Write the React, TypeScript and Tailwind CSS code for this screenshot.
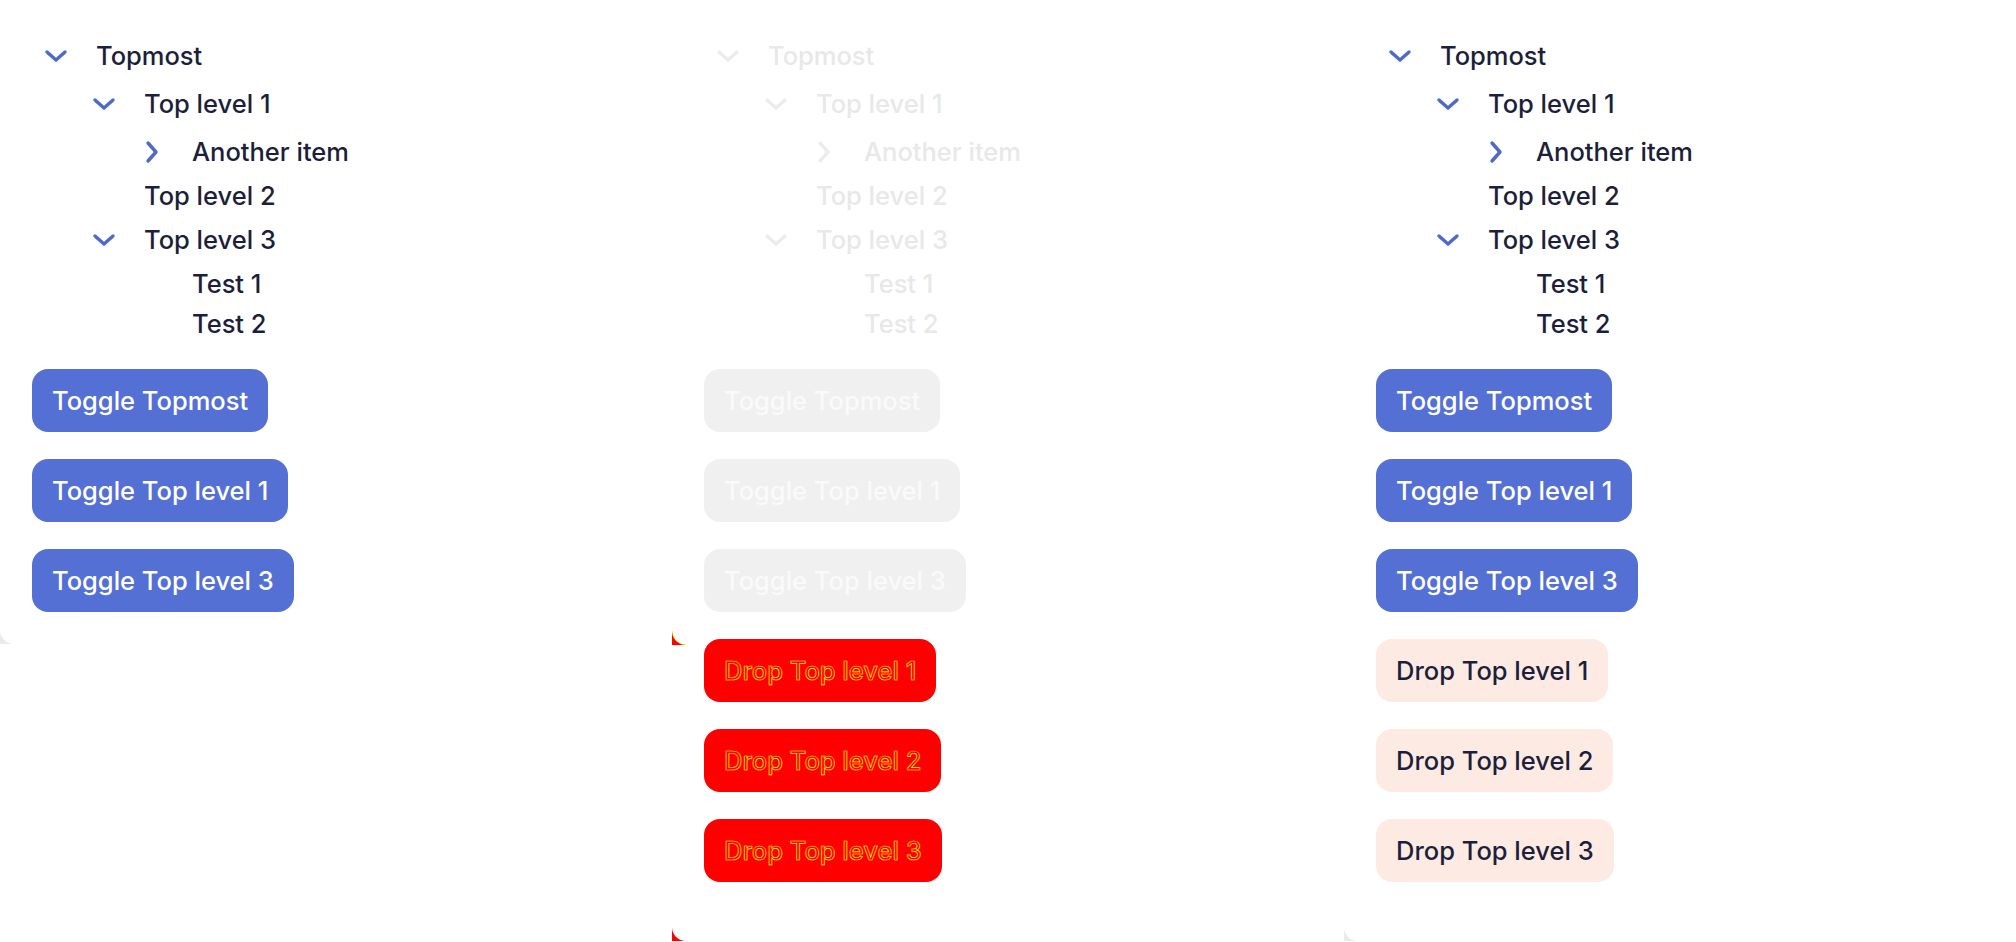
import { useState } from "react";

type TreeNode = {
  label: string;
  open?: boolean;
  children?: TreeNode[];
};

type Variant = "live" | "ghost";

const tree: TreeNode = {
  label: "Topmost",
  open: true,
  children: [
    {
      label: "Top level 1",
      open: true,
      children: [{ label: "Another item", open: false, children: [{ label: "Hidden" }] }],
    },
    { label: "Top level 2" },
    {
      label: "Top level 3",
      open: true,
      children: [{ label: "Test 1" }, { label: "Test 2" }],
    },
  ],
};

function Chevron({ open, ghost }: { open: boolean; ghost: boolean }) {
  return (
    <svg
      width="24"
      height="24"
      viewBox="0 0 24 24"
      fill="none"
      stroke={ghost ? "#ececec" : "#4f68c9"}
      strokeWidth="3.4"
      strokeLinecap="round"
      strokeLinejoin="round"
      className={open ? "" : "-rotate-90"}
    >
      <polyline points="3 8 12 16 21 8" />
    </svg>
  );
}

function TreeRow({ node, variant }: { node: TreeNode; variant: Variant }) {
  const ghost = variant === "ghost";
  const text = ghost ? "text-[#e8e8e8]" : "text-[#1c1f3b]";

  if (!node.children) {
    return <div className={`flex h-[40px] items-center pl-16 ${text}`}>{node.label}</div>;
  }

  return (
    <div>
      <div className={`flex h-[48px] items-center ${text}`}>
        <span className="flex h-12 w-12 items-center justify-center">
          <Chevron open={!!node.open} ghost={ghost} />
        </span>
        <span className="ml-4">{node.label}</span>
      </div>
      {node.open && (
        <div className="pl-12">
          {node.children.map((c) => (
            <TreeRow key={c.label} node={c} variant={variant} />
          ))}
        </div>
      )}
    </div>
  );
}

function Panel({ variant, drops }: { variant: Variant; drops: "none" | "red" | "soft" }) {
  const ghost = variant === "ghost";
  const [toggles] = useState(["Toggle Topmost", "Toggle Top level 1", "Toggle Top level 3"]);
  const dropLabels = ["Drop Top level 1", "Drop Top level 2", "Drop Top level 3"];

  // the outer fill only shows through the rounded bottom-left corner
  return (
    <div className={`relative w-[672px] shrink-0 ${ghost ? "bg-[#ff0000]" : "bg-[#ebebeb]"}`}>
      {ghost && (
        <div className="absolute left-0 top-[631px] h-[14px] w-[14px] bg-[radial-gradient(circle_at_100%_0,transparent_13.5px,#ffff00_13.5px,#ff0000_14.5px)]" />
      )}
      <div
        className={`rounded-bl-[14px] bg-white px-8 pt-8 ${
          drops === "none" ? "pb-8" : "pb-[59px]"
        }`}
      >
        <TreeRow node={tree} variant={variant} />

        <div className="mt-[25px] flex flex-col items-start gap-[27px]">
          {toggles.map((t) => (
            <button
              key={t}
              className={`flex h-[63px] items-center rounded-2xl px-5 ${
                ghost ? "bg-[#f0f0f0] text-[#fafafa]" : "bg-[#5470d4] text-white"
              }`}
            >
              {t}
            </button>
          ))}
          {drops === "red" &&
            dropLabels.map((t) => (
              <button
                key={t}
                className="flex h-[63px] items-center rounded-2xl bg-[#ff0000] px-5 text-[#ff0000] [-webkit-text-stroke:0.7px_#ffff00]"
              >
                {t}
              </button>
            ))}
          {drops === "soft" &&
            dropLabels.map((t) => (
              <button
                key={t}
                className="flex h-[63px] items-center rounded-2xl bg-[#fdebe3] px-5 text-[#1c1f3b]"
              >
                {t}
              </button>
            ))}
        </div>
      </div>
    </div>
  );
}

export default function App() {
  return (
    <div className="flex min-h-screen items-start overflow-hidden bg-white font-['Inter','Noto_Sans',sans-serif] text-[25.5px] font-medium leading-none">
      <Panel variant="live" drops="none" />
      <Panel variant="ghost" drops="red" />
      <Panel variant="live" drops="soft" />
    </div>
  );
}
